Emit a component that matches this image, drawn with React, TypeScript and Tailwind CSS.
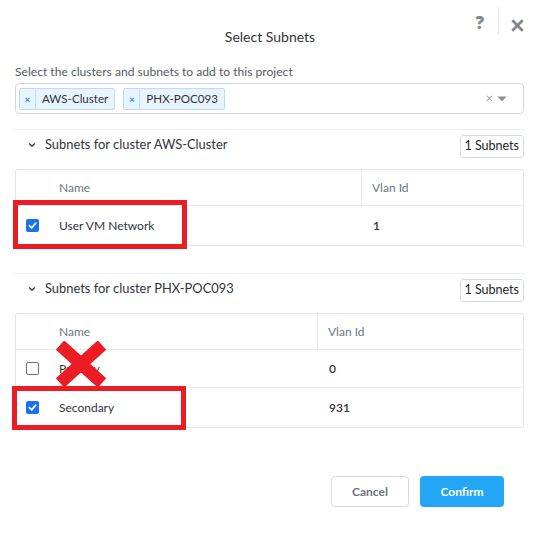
import React from "react";

function Check({ checked }: { checked: boolean }) {
  return checked ? (
    <div className="w-[13px] h-[13px] rounded-[2px] bg-[#1a73e8] flex items-center justify-center">
      <svg width="9" height="9" viewBox="0 0 10 10">
        <path d="M1.5 5.2 L4 7.6 L8.6 2.4" stroke="white" strokeWidth="1.8" fill="none" strokeLinecap="round" strokeLinejoin="round" />
      </svg>
    </div>
  ) : (
    <div className="w-[13px] h-[13px] rounded-[2px] border border-[#707070] bg-white" />
  );
}

function Tag({ label }: { label: string }) {
  return (
    <div className="h-[22px] flex items-center border border-[#b9dcfb] bg-[#e8f4ff] rounded-[2px]">
      <span className="w-[15px] text-center text-[10px] leading-none text-[#1e88e5] font-bold">×</span>
      <span className="w-px h-[20px] bg-[#b9dcfb]" />
      <span className="px-[6px] text-[11.6px] text-[#2f3438]">{label}</span>
    </div>
  );
}

function SectionHeader({ title }: { title: string }) {
  return (
    <div className="border-t border-[#eceff1] pt-[5px] flex items-center justify-between">
      <div className="flex items-center pl-[13px] -mt-[3px]">
        <svg width="8" height="6" viewBox="0 0 8 6" className="mr-[9px]">
          <path d="M1.2 1.5 L4 4.3 L6.8 1.5" stroke="#3a4046" strokeWidth="1.5" fill="none" />
        </svg>
        <span className="text-[12.9px] text-[#2f3438]">{title}</span>
      </div>
      <div className="h-[23px] px-[4px] flex items-center border border-[#d5d9dd] rounded-[3px] text-[12.5px] text-[#22272b]">
        1 Subnets
      </div>
    </div>
  );
}

export default function App() {
  return (
    <div
      className="w-[540px] h-[535px] bg-white relative"
      style={{ fontFamily: "Lato, 'Open Sans', sans-serif" }}
    >
      <div className="absolute top-[7px] right-[16px] flex items-center">
        <span className="text-[17px] font-extrabold text-[#7f888f] leading-none mr-[14px] mt-[3px] font-['Open_Sans',sans-serif]">?</span>
        <span className="w-px h-[28px] bg-[#e4e7ea]" />
        <svg width="13" height="13" viewBox="0 0 13 13" className="ml-[12px] mt-[8px]">
          <path d="M1.3 1.3 L11.7 11.7 M11.7 1.3 L1.3 11.7" stroke="#7f888f" strokeWidth="2.7" />
        </svg>
      </div>

      <div className="pt-[29px] text-center text-[14px] leading-[16px] text-[#2f3438]">Select Subnets</div>

      <div className="pl-[15px] pr-[16px]">
        <div className="mt-[20px] text-[12.1px] leading-[14px] text-[#525a63]">
          Select the clusters and subnets to add to this project
        </div>
        <div className="mt-[4px] h-[31px] border border-[#d3d7db] rounded-[4px] flex items-center pl-[3px] pr-[16px]">
          <div className="flex items-center gap-[8px]">
            <Tag label="AWS-Cluster" />
            <Tag label="PHX-POC093" />
          </div>
          <div className="ml-auto flex items-center gap-[4px]">
            <span className="text-[13px] text-[#9aa2a9] leading-none">×</span>
            <svg width="10" height="6" viewBox="0 0 10 6">
              <path d="M0.5 0.5 L9.5 0.5 L5 5.5 Z" fill="#8a939b" />
            </svg>
          </div>
        </div>

        <div className="mt-[15px]">
          <SectionHeader title="Subnets for cluster AWS-Cluster" />
          <div className="mt-[11px] border border-[#e2e6e9] rounded-[2px]">
            <div className="h-[35px] flex text-[12px] text-[#6a7783]">
              <div className="w-[346px] border-r border-[#e8ebee] flex items-center pl-[43px]">Name</div>
              <div className="flex items-center pl-[10px]">Vlan Id</div>
            </div>
            <div className="h-[40px] border-t border-[#e8ebee] flex items-center text-[12px] text-[#2f3438] relative">
              <div className="w-[347px] flex items-center pl-[10px]">
                <Check checked />
                <span className="ml-[20px]">User VM Network</span>
              </div>
              <div className="pl-[10px] font-semibold">1</div>
              <div className="absolute -left-[3px] -top-[6px] w-[174px] h-[49px] border-[5px] border-[#ec1c24]" />
            </div>
          </div>
        </div>

        <div className="mt-[27px]">
          <SectionHeader title="Subnets for cluster PHX-POC093" />
          <div className="mt-[11px] border border-[#e2e6e9] rounded-[2px]">
            <div className="h-[35px] flex text-[12px] text-[#6a7783]">
              <div className="w-[302px] border-r border-[#e8ebee] flex items-center pl-[43px]">Name</div>
              <div className="flex items-center pl-[10px]">Vlan Id</div>
            </div>
            <div className="h-[38px] border-t border-[#e8ebee] flex items-center text-[12px] text-[#2f3438] relative">
              <div className="w-[303px] flex items-center pl-[10px]">
                <Check checked={false} />
                <span className="ml-[20px]">Primary</span>
              </div>
              <div className="pl-[10px] font-semibold">0</div>
              <svg width="52" height="46" viewBox="0 0 52 46" className="absolute left-[39px] -top-[9px]">
                <path d="M5 4 L47 42 M47 4 L5 42" stroke="#ec1c24" strokeWidth="12.5" />
              </svg>
            </div>
            <div className="h-[40px] border-t border-[#e8ebee] flex items-center text-[12px] text-[#2f3438] relative">
              <div className="w-[303px] flex items-center pl-[10px]">
                <Check checked />
                <span className="ml-[20px]">Secondary</span>
              </div>
              <div className="pl-[10px] font-semibold">931</div>
              <div className="absolute -left-[4px] -top-[2px] w-[174px] h-[44px] border-[5px] border-[#ec1c24]" />
            </div>
          </div>
        </div>

        <div className="mt-[48px] flex justify-end gap-[11px] pr-[20px]">
          <div className="w-[78px] h-[31px] border border-[#d5d9dd] rounded-[4px] flex items-center justify-center text-[12px] font-bold text-[#6b737b]">
            Cancel
          </div>
          <div className="w-[84px] h-[31px] rounded-[4px] bg-[#22a6f5] flex items-center justify-center text-[12px] font-bold text-white">
            Confirm
          </div>
        </div>
      </div>
    </div>
  );
}
